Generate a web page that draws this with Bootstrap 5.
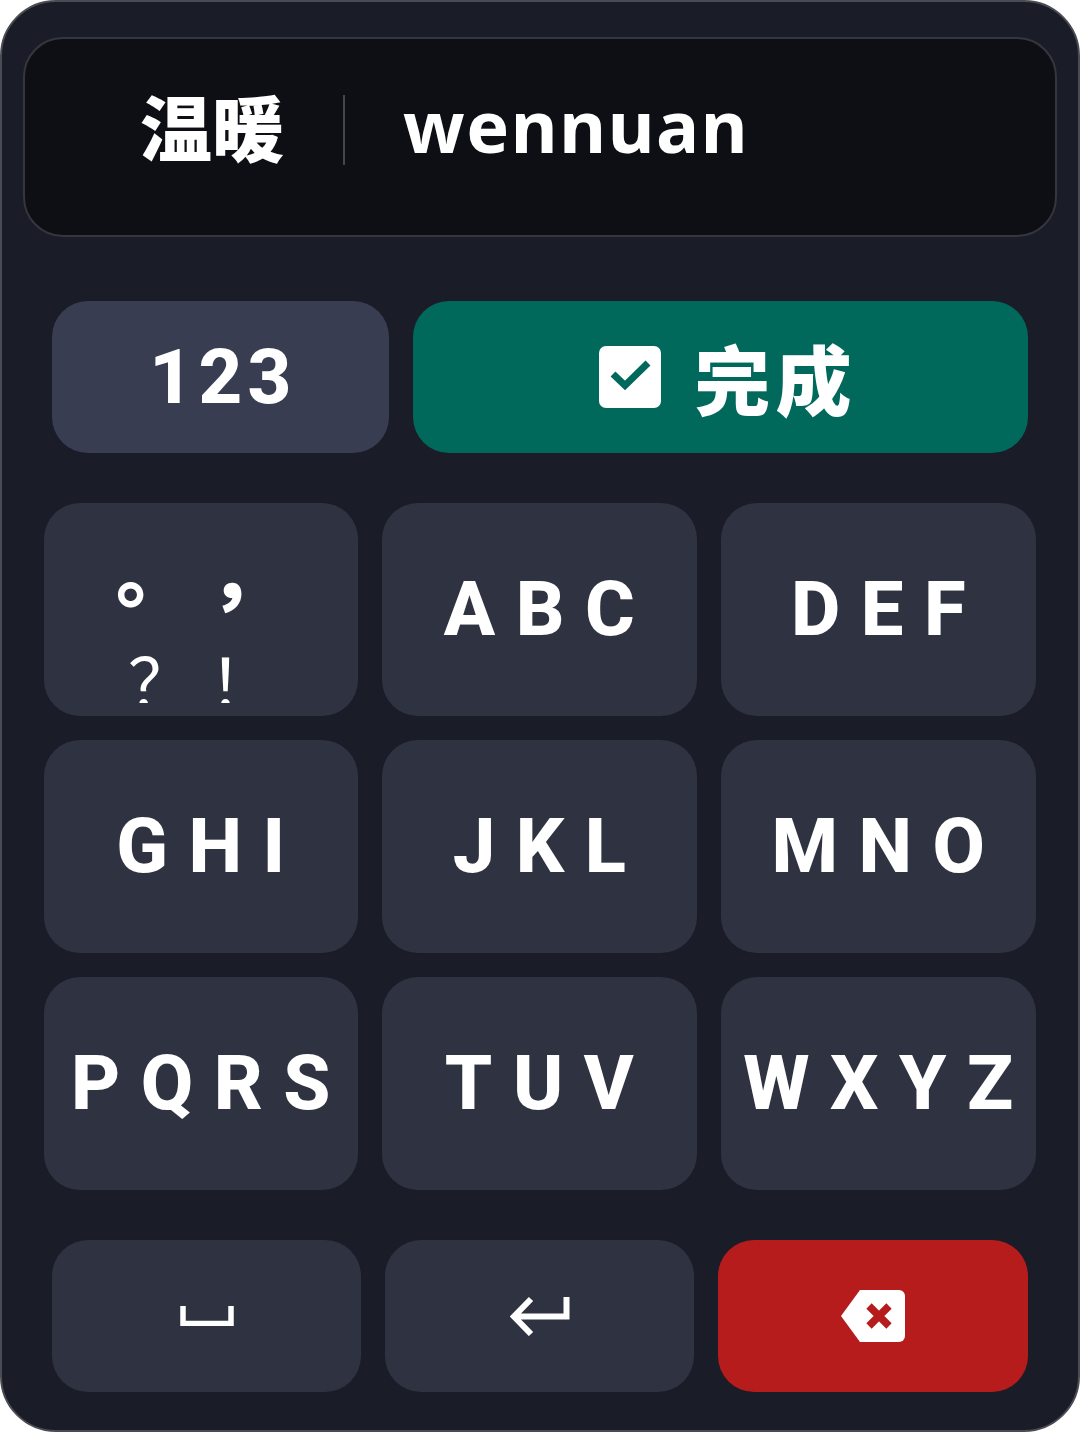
<!DOCTYPE html>
<html lang="zh">
<head>
<meta charset="utf-8">
<title>T9</title>
<link href="https://cdn.jsdelivr.net/npm/bootstrap@5.3.0/dist/css/bootstrap.min.css" rel="stylesheet">
<style>
html,body{margin:0;background:#fff;}
.pad-shell{width:1080px;height:1432px;background:#1a1c28;border:2px solid #4b4c53;border-radius:56px;padding:35px 21px 0;overflow:hidden;}
.pad-display{height:200px;background:#0e0f14;border:2px solid #35363f;border-radius:40px;padding-left:115px;padding-bottom:24px;color:#fff;}
.han{font:900 72px/1 "Noto Sans CJK SC",sans-serif;}
.pad-sep{width:2px;height:70px;background:#45464d;margin:9px 58px 0 59px;}
.latin{font:700 72px/1 "Noto Sans","Open Sans",sans-serif;letter-spacing:1.600px;}
.top-row{margin:64px 29px 0;display:grid;grid-template-columns:337px 615px;gap:24px;}
.bot-row{margin:50px 29px 0;display:grid;grid-template-columns:309px 309px 310px;gap:24px;}
.pad-key{border:0;color:#fff;background:#2f3240;border-radius:36px;font:800 76px/1 Roboto,sans-serif;padding:0;display:flex;align-items:center;justify-content:center;}
.ctl{height:152px;}
.ctl-num{background:#393d52;letter-spacing:5.300px;padding-left:5px;}
.ctl-done{background:#00695c;gap:33px;padding-left:15px;font:900 76px/1 "Noto Sans CJK SC",sans-serif;}
.ctl-done span{letter-spacing:5.200px;}
.ctl-done svg{margin-top:-1px;}
.ctl-del{background:#b71c1c;}
.key-grid{margin:50px 21px 0;display:grid;grid-template-columns:314px 315px 315px;grid-auto-rows:213px;gap:24px;}
.ltr{letter-spacing:20.500px;padding-left:20px;padding-bottom:2px;}
.punct-wrap{display:block;font-family:"Noto Sans CJK SC",sans-serif;text-align:left;}
.p-line{display:flex;}
.p-a{margin-top:4px;height:96px;line-height:96px;padding-left:72px;gap:17px;}
.p-b{height:87px;padding:29px 0 0 84px;gap:15px;font-size:66px;font-weight:400;line-height:66px;overflow:hidden;}
</style>
</head>
<body>
<div class="pad-shell">
  <div class="pad-display d-flex align-items-center">
    <span class="han">温暖</span><span class="pad-sep"></span><span class="latin">wennuan</span>
  </div>
  <div class="top-row">
    <button class="pad-key ctl ctl-num">123</button>
    <button class="pad-key ctl ctl-done">
      <svg width="62" height="62" viewBox="0 0 62 62"><rect width="62" height="62" rx="7" fill="#fff"/><path d="M14 28L26 39.500 49 17" fill="none" stroke="#00695c" stroke-width="7"/></svg>
      <span>完成</span>
    </button>
  </div>
  <div class="key-grid">
    <button class="pad-key punct-wrap"><span class="p-line p-a"><span>。</span><span>，</span></span><span class="p-line p-b"><span>？</span><span>！</span></span></button>
    <button class="pad-key ltr">ABC</button>
    <button class="pad-key ltr">DEF</button>
    <button class="pad-key ltr">GHI</button>
    <button class="pad-key ltr">JKL</button>
    <button class="pad-key ltr">MNO</button>
    <button class="pad-key ltr">PQRS</button>
    <button class="pad-key ltr">TUV</button>
    <button class="pad-key ltr">WXYZ</button>
  </div>
  <div class="bot-row">
    <button class="pad-key ctl"><svg width="54" height="20" viewBox="0 0 54 20"><path d="M3 0V17.500H51V0" fill="none" stroke="#fff" stroke-width="5.500"/></svg></button>
    <button class="pad-key ctl"><svg width="60" height="40" viewBox="0 0 60 40"><path d="M56.500 1V20.500H5M21 3L4 20.500 21 38" fill="none" stroke="#fff" stroke-width="6"/></svg></button>
    <button class="pad-key ctl ctl-del"><svg width="66" height="52" viewBox="0 0 66 52"><path d="M20 0H59a6 6 0 0 1 6 6V46a6 6 0 0 1-6 6H20L1 26Z" fill="#fff"/><path d="M29 16L49 36M49 16L29 36" stroke="#b71c1c" stroke-width="7.500" fill="none"/></svg></button>
  </div>
</div>
<script src="https://cdn.jsdelivr.net/npm/bootstrap@5.3.0/dist/js/bootstrap.bundle.min.js"></script>
</body>
</html>
